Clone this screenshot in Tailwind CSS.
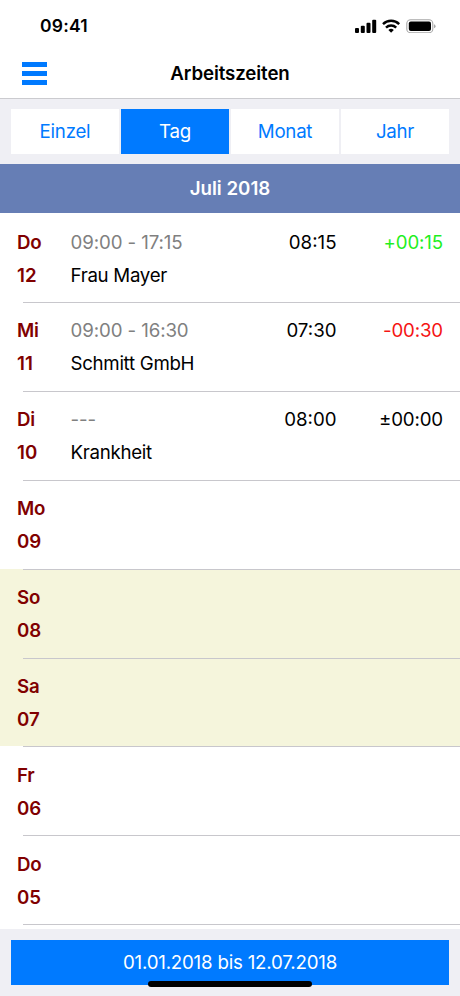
<!DOCTYPE html>
<html lang="de">
<head>
<meta charset="utf-8">
<title>Arbeitszeiten</title>
<script src="https://cdn.jsdelivr.net/npm/@tailwindcss/browser@4"></script>
</head>
<body class="bg-white">
<div class="flex h-[996px] w-[460px] flex-col overflow-hidden bg-white font-['Inter','Liberation_Sans',sans-serif] text-[18.7px] tracking-[-0.35px] text-black">
  <div class="flex h-[49px] shrink-0 items-center justify-between pr-[24px] pl-[40px] pt-[2px]">
    <span class="pt-px text-[17.5px] font-[560] tracking-[0.2px]">09:41</span>
    <svg class="h-[14px] w-[81px]" viewBox="0 0 81 14">
      <rect x="0" y="9" width="4" height="5" rx="1"/>
      <rect x="5.8" y="6.7" width="4" height="7.3" rx="1"/>
      <rect x="11.5" y="3.8" width="4" height="10.2" rx="1"/>
      <rect x="17.2" y="0.8" width="4" height="13.2" rx="1"/>
      <g fill="none" stroke="#000" stroke-width="2.4">
        <path d="M28 5.1a11.4 11.4 0 0 1 16.2 0"/>
        <path d="M31 8.6a7.2 7.2 0 0 1 10.2 0"/>
      </g>
      <path d="M33.4 11.1a3.9 3.9 0 0 1 5.4 0L36.1 13.8z"/>
      <rect x="51.8" y="0.8" width="26" height="12.9" rx="3.8" fill="none" stroke="#a8a8a8" stroke-width="1.1"/>
      <rect x="53.8" y="2.6" width="22.2" height="9.3" rx="2"/>
      <path d="M79 5.2q1.6.6 1.6 2.05t-1.6 2.05z" fill="#a8a8a8"/>
    </svg>
  </div>
  <header class="grid h-[49px] shrink-0 grid-cols-[1fr_auto_1fr] items-center px-[22px]">
    <div class="flex flex-col gap-[4px]">
      <div class="h-[5px] w-[25px] bg-[#007aff]"></div>
      <div class="h-[5px] w-[25px] bg-[#007aff]"></div>
      <div class="h-[5px] w-[25px] bg-[#007aff]"></div>
    </div>
    <h1 class="pt-[2px] font-[560] tracking-[-0.1px]">Arbeitszeiten</h1>
  </header>
  <nav class="flex h-[66px] shrink-0 gap-[2px] border-t border-[#cbcbcf] bg-[#efeff4] px-[11px] pt-[10px] pb-[10.5px] tracking-[-0.25px] text-[#007aff]">
    <div class="flex flex-1 items-center justify-center bg-white pt-[2px]">Einzel</div>
    <div class="flex flex-1 items-center justify-center bg-[#007aff] pt-[2px] text-white">Tag</div>
    <div class="flex flex-1 items-center justify-center bg-white pt-[2px]">Monat</div>
    <div class="flex flex-1 items-center justify-center bg-white pt-[2px]">Jahr</div>
  </nav>
  <h2 class="flex h-[49px] shrink-0 items-center justify-center bg-[#667eb5] pt-px font-[560] tracking-[0px] text-white">Juli 2018</h2>
  <main id="days" class="h-[716px] shrink-0 overflow-hidden"></main>
  <footer class="relative flex-1 bg-[#efeff4] px-[11px] pt-[11px]">
    <div class="flex h-[44.5px] items-center justify-center bg-[#007aff] pt-[2px] tracking-[-0.2px] text-white">01.01.2018 bis 12.07.2018</div>
    <div class="absolute top-[52px] left-[148px] h-[6px] w-[164px] rounded-full bg-black"></div>
  </footer>
</div>
<script>
const days = [
  ['Do', '12', '09:00 - 17:15', 'Frau Mayer', '08:15', '+00:15', 'text-[#1fef1f]'],
  ['Mi', '11', '09:00 - 16:30', 'Schmitt GmbH', '07:30', '-00:30', 'text-[#f51414]'],
  ['Di', '10', '---', 'Krankheit', '08:00', '±00:00', 'text-black'],
  ['Mo', '09'], ['So', '08'], ['Sa', '07'], ['Fr', '06'], ['Do', '05'],
];
document.getElementById('days').innerHTML = days.map(([day, date, span = '', title = '', total = '', diff = '', tone = '']) => `
  <section class="h-[88.9px] ${day[0] === 'S' ? 'bg-[#f5f5dc]' : 'bg-white'} flex flex-col">
    <div class="grid h-[89px] shrink-0 grid-cols-[53.5px_1fr_100px_106.5px] grid-rows-[33px_33px] pt-[12.6px] pr-[17px] pl-[17px] leading-[33px] whitespace-nowrap">
      <b class="font-[580] tracking-[-0.2px] text-[#800000]">${day}</b>
      <span class="tracking-[-0.1px] text-[#808080]">${span}</span>
      <span class="text-right tracking-[0px]">${total}</span>
      <span class="text-right tracking-[-0.15px] ${tone}">${diff}</span>
      <b class="font-[580] tracking-[0px] text-[#800000]">${date}</b>
      <span class="tracking-[-0.3px]">${title}</span>
    </div>
    <div class="relative ml-[23px] h-px shrink-0 bg-[#c8c7cc]"></div>
  </section>`).join('');
</script>
</body>
</html>
